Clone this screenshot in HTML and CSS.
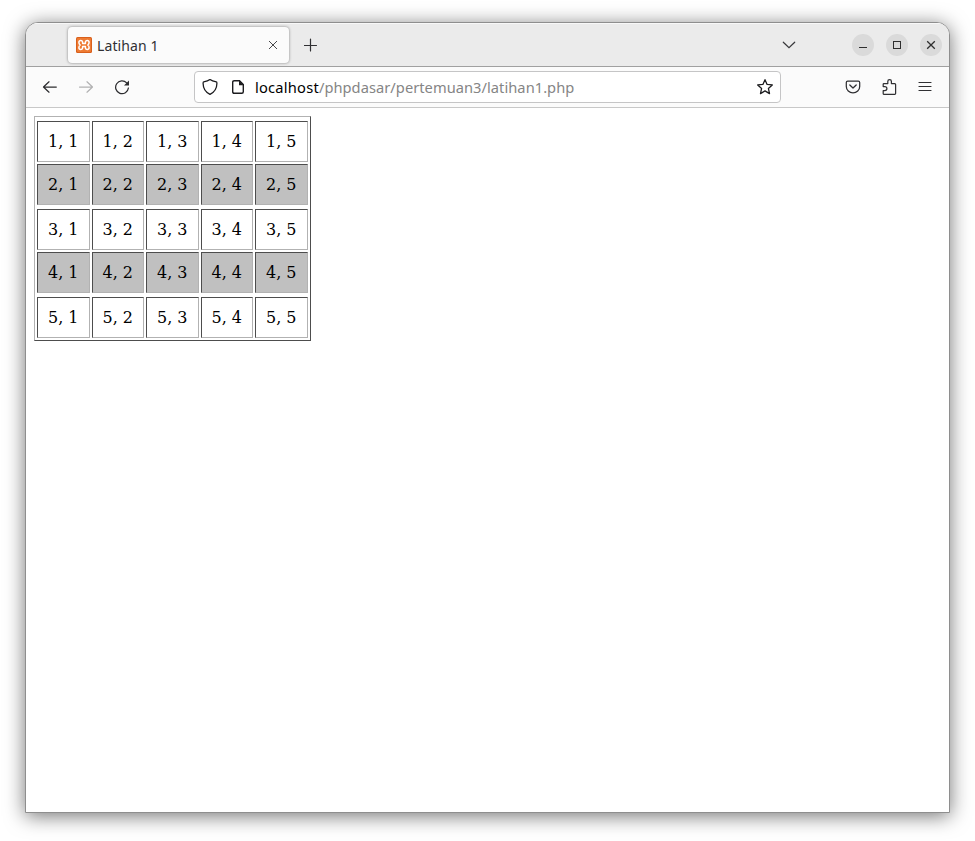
FILE: index.html
```html
<!DOCTYPE html>
<html lang="id">
<head>
<meta charset="utf-8">
<title>Latihan 1</title>
<link rel="stylesheet" href="styles.css">
</head>
<body>
<div class="window">
  <header class="tabbar">
    <div class="tab">
      <svg class="favicon" width="16" height="16" viewBox="0 0 16 16"><rect width="16" height="16" rx="1.5" fill="#d9601c"/><rect x="1" y="1" width="14" height="14" rx="1" fill="#ee7b33"/><path d="M6.600 4.800Q6.200 3.500 4.800 3.500 2.900 3.500 2.900 5.500 2.900 7 4.200 8 2.900 9 2.900 10.500q0 2 1.900 2 1.400 0 1.800-1.300M9.400 4.800q.4-1.300 1.800-1.300 1.900 0 1.900 2 0 1.500-1.300 2.500 1.300 1 1.300 2.500 0 2-1.900 2-1.400 0-1.800-1.300M6.600 4.800v1.700h2.800V4.800M6.600 11.200V9.500h2.800v1.700" fill="none" stroke="#fff" stroke-width="1.500" stroke-linejoin="round"/></svg>
      <span class="tab-title">Latihan 1</span>
      <svg class="tab-close" width="10" height="10" viewBox="0 0 10 10"><path d="M1 1l8 8M9 1L1 9" stroke="#48484b"/></svg>
    </div>
    <svg class="new-tab" width="14" height="14" viewBox="0 0 14 14"><path d="M6.500 1v12M.5 7.500h12" stroke="#303033" stroke-width="1.200" stroke-linecap="round"/></svg>
    <svg class="tab-list" width="14" height="8" viewBox="0 0 14 8"><path d="M1.300 1.200L7 6.700l5.700-5.500" fill="none" stroke="#38383b" stroke-width="1.200" stroke-linecap="round"/></svg>
    <div class="controls">
      <span class="control"><svg width="22" height="22" viewBox="0 0 22 22"><path d="M7 13.500h8" stroke="#2e2e2e"/></svg></span>
      <span class="control"><svg width="22" height="22" viewBox="0 0 22 22"><rect x="7.500" y="7.500" width="7" height="7" fill="none" stroke="#2e2e2e"/></svg></span>
      <span class="control"><svg width="22" height="22" viewBox="0 0 22 22"><path d="M7.200 7.200l7.600 7.600M14.800 7.200l-7.600 7.600" stroke="#2e2e2e" stroke-width="1.300"/></svg></span>
    </div>
  </header>
  <nav class="toolbar">
    <svg class="nav-icon" width="16" height="16" viewBox="0 0 16 16"><path d="M14.300 8H1.700M7 2.800L1.500 8 7 13.200" fill="none" stroke="#2c2c2f" stroke-width="1.250" stroke-linecap="round" stroke-linejoin="round"/></svg>
    <svg class="nav-icon" width="16" height="16" viewBox="0 0 16 16"><path d="M1.500 8h12.800M9 2.800L14.500 8 9 13.200" fill="none" stroke="#b2b2b3" stroke-width="1.250" stroke-linecap="round" stroke-linejoin="round"/></svg>
    <svg class="nav-icon" width="16" height="16" viewBox="0 0 16 16"><path d="M12.700 3.900A6.400 6.400 0 1 0 14.400 9" fill="none" stroke="#2c2c2f" stroke-width="1.250" stroke-linecap="round"/><path d="M15 1.500v5H10z" fill="#2c2c2f"/></svg>
    <div class="urlbar">
      <svg class="shield" width="16" height="18" viewBox="0 0 16 18"><path d="M8 1.600C6.400 2.900 4 3.600 1.700 3.900 1 4 1.100 4.500 1.100 5.500c.1 5.500 3 9 6.900 10.800 3.900-1.800 6.800-5.300 6.900-10.800 0-1 .1-1.500-.6-1.600C12 3.600 9.600 2.900 8 1.600z" fill="none" stroke="#1c1c1f" stroke-width="1.300" stroke-linejoin="round"/></svg>
      <svg class="page" width="12" height="14" viewBox="0 0 12 14"><path d="M2.200.7H7.500L11.300 4.500v7.300q0 1.500-1.500 1.500H2.200q-1.500 0-1.500-1.500V2.200Q.7.7 2.200.7z" fill="none" stroke="#1c1c1f" stroke-width="1.400"/><path d="M7 .5v4.800h4.800z" fill="#1c1c1f"/></svg>
      <span class="url"><b class="host">localhost</b><span class="path">/phpdasar/pertemuan3/latihan1.php</span></span>
      <svg class="star" width="18" height="18" viewBox="0 0 18 18"><path d="M9 1.700l2.100 4.700 5.200.5-3.900 3.500 1.100 5.200L9 12.900l-4.500 2.700 1.100-5.200L1.700 6.900l5.200-.5z" fill="none" stroke="#1c1c1f" stroke-width="1.300" stroke-linejoin="round"/></svg>
    </div>
    <div class="actions">
      <svg width="16" height="16" viewBox="0 0 16 16"><path d="M2.700 2h10.600q1.400 0 1.400 1.400v4A6.700 6.500 0 0 1 1.300 7.400v-4Q1.300 2 2.700 2z" fill="none" stroke="#303033" stroke-width="1.250"/><path d="M4.800 6L8 9l3.200-3" fill="none" stroke="#303033" stroke-width="1.300" stroke-linecap="round" stroke-linejoin="round"/></svg>
      <svg width="16" height="16" viewBox="0 0 16 16"><path d="M2.200 7.500V5.300Q2.200 4.600 2.900 4.600H6.800V2.500a1.800 1.800 0 0 1 3.600 0V4.600h3.300q.9 0 .9.900v9q0 .8-.9.800H3.100Q2.200 15.300 2.200 14.400V11.700H3.800a2.100 2.100 0 0 0 0-4.200z" fill="none" stroke="#303033" stroke-width="1.250" stroke-linejoin="round"/></svg>
      <svg width="16" height="16" viewBox="0 0 16 16"><path d="M2 3.500h12M2 7.500h12M2 11.500h12" stroke="#303033" stroke-width="1.200" stroke-linecap="round"/></svg>
    </div>
  </nav>
  <main class="content">
    <div class="table">
      <div class="row"><span>1, 1</span><span>1, 2</span><span>1, 3</span><span>1, 4</span><span>1, 5</span></div>
      <div class="row shaded"><span>2, 1</span><span>2, 2</span><span>2, 3</span><span>2, 4</span><span>2, 5</span></div>
      <div class="row"><span>3, 1</span><span>3, 2</span><span>3, 3</span><span>3, 4</span><span>3, 5</span></div>
      <div class="row shaded"><span>4, 1</span><span>4, 2</span><span>4, 3</span><span>4, 4</span><span>4, 5</span></div>
      <div class="row"><span>5, 1</span><span>5, 2</span><span>5, 3</span><span>5, 4</span><span>5, 5</span></div>
    </div>
  </main>
</div>
</body>
</html>
```
FILE: styles.css
```css
* { box-sizing: border-box; }
body {
  margin: 0;
  padding: 22px 25px 28px;
  height: 841px;
  background: #fff;
  overflow: hidden;
  font-family: "Noto Sans", sans-serif;
}
svg { display: block; flex: none; }
.window {
  width: 925px;
  height: 791px;
  border: 1px solid #8e8e8e;
  border-radius: 13px 13px 0 0;
  background: #fff;
  overflow: hidden;
  box-shadow: 0 3px 20px rgba(0, 0, 0, .55);
}
.tabbar {
  display: flex;
  align-items: center;
  height: 44px;
  padding-left: 42px;
  background: #ebebeb;
  border-top: 1px solid #f8f8f8;
  border-bottom: 1px solid #a0a0a0;
}
.tab {
  display: flex;
  align-items: center;
  width: 221px;
  height: 36px;
  padding: 0 11px 0 8px;
  border-radius: 4px;
  background: #fbfbfb;
  box-shadow: 0 0 3px rgba(0, 0, 0, .45);
}
.tab-title {
  position: relative;
  top: 1px;
  margin-left: 5px;
  font-size: 14px;
  line-height: 20px;
  letter-spacing: .1px;
  color: #303033;
}
.tab-close { margin-left: auto; }
.new-tab { margin-left: 15px; }
.tab-list { margin-left: auto; }
.controls { display: flex; gap: 12px; margin: 0 7px 0 56px; }
.control { width: 22px; height: 22px; border-radius: 50%; background: #dadada; }
.toolbar {
  display: flex;
  align-items: center;
  height: 41px;
  padding: 0 16px;
  background: #fbfbfb;
  border-bottom: 1px solid #c8c8c8;
}
.nav-icon { margin-right: 20px; }
.urlbar {
  display: flex;
  align-items: center;
  width: 587px;
  height: 32px;
  margin-left: 44px;
  padding: 0 6px 0 7px;
  border: 1px solid #c5c5c6;
  border-radius: 4px;
  background: #fff;
}
.page { margin-left: 14px; }
.url {
  display: flex;
  margin-left: 11px;
  font-size: 14.67px;
  line-height: 20px;
  white-space: nowrap;
}
.host { font-weight: 400; letter-spacing: .22px; color: #000; }
.path { letter-spacing: .04px; color: #858585; }
.star { margin-left: auto; }
.actions { display: flex; gap: 20px; margin-left: auto; }
.content { padding: 8px; font: 16px/19px "DejaVu Serif", serif; }
.table {
  width: 277px;
  padding: 0 2px 2px;
  border: 1px solid;
  border-color: #b2b2b2 #4d4d4d #4d4d4d #b2b2b2;
}
.row { display: flex; gap: 2px; padding-top: 4px; }
.row.shaded { padding-top: 2px; }
.row span {
  width: 52.5px;
  height: 41px;
  padding: 10px;
  border: 1px solid;
  border-color: #4d4d4d #b2b2b2 #b2b2b2 #4d4d4d;
  white-space: nowrap;
}
.shaded span { background: #c0c0c0; }
```
